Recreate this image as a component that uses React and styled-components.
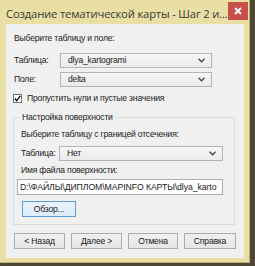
import React from "react";
import styled, { createGlobalStyle } from "styled-components";

const Global = createGlobalStyle`
  html, body { margin: 0; padding: 0; }
  body { width: 255px; height: 266px; overflow: hidden; background: #4e4736; }
`;

const Page = styled.div`
  width: 255px;
  height: 266px;
  display: flex;
  align-items: flex-start;
  background: #4e4736;
`;

const Window = styled.div`
  width: 249px;
  height: 262px;
  background: #e9dfa4;
  border-right: 1px solid #b9ad74;
  border-bottom: 1px solid #b9ad74;
  display: flex;
  flex-direction: column;
`;

const TitleBar = styled.div`
  height: 24px;
  display: flex;
  align-items: flex-start;
  justify-content: space-between;
  padding-left: 6px;
  box-sizing: border-box;
`;

const Title = styled.div`
  font-family: "Open Sans", "Noto Sans", sans-serif;
  font-size: 11.3px;
  line-height: 14px;
  margin-top: 7px;
  color: #3a3a3a;
  white-space: nowrap;
  letter-spacing: -0.2px;
`;

const Close = styled.div`
  width: 22px;
  height: 18px;
  margin-top: 2px;
  margin-right: 1px;
  background: #c7504a;
  color: #fff;
  display: flex;
  align-items: center;
  justify-content: center;
`;

const Client = styled.div`
  margin: 0 5px 0 6px;
  height: 234px;
  background: #f0f0f0;
  padding: 9px 0 0 8px;
  box-sizing: border-box;
  font-family: "Liberation Sans", Arial, sans-serif;
  font-size: 8.6px;
  letter-spacing: -0.2px;
  line-height: 11px;
  color: #222;
  display: flex;
  flex-direction: column;
  align-items: flex-start;
`;

const Text = styled.div`
  margin-top: ${(p) => p.$mt || 0}px;
  padding-left: ${(p) => p.$pl || 0}px;
  white-space: nowrap;
`;

const Row = styled.div`
  display: flex;
  align-items: center;
  margin-top: ${(p) => p.$mt || 0}px;
  padding-left: ${(p) => p.$pl || 0}px;
`;

const Label = styled.div`
  width: ${(p) => p.$w}px;
  white-space: nowrap;
`;

const Select = styled.div`
  width: ${(p) => p.$w}px;
  height: 15px;
  box-sizing: border-box;
  border: 1px solid #b4b4b4;
  background: linear-gradient(#f6f6f6, #ebebeb);
  display: flex;
  align-items: center;
  justify-content: space-between;
  padding: 0 6px 0 7px;
`;

const Check = styled.div`
  width: 9px;
  height: 9px;
  box-sizing: border-box;
  border: 1px solid #6f6f6f;
  background: #fff;
  margin-left: -1px;
  margin-right: 5px;
  display: flex;
  align-items: center;
  justify-content: center;
`;

const Group = styled.fieldset`
  margin: 8px 0 0 -1px;
  width: 222px;
  box-sizing: border-box;
  border: 1px solid #dcdcdc;
  padding: 0 11px 7px 3px;
  display: flex;
  flex-direction: column;
  align-items: flex-start;
`;

const Legend = styled.legend`
  padding: 0 2px;
  margin-left: 3px;
  line-height: 11px;
`;

const Input = styled.div`
  width: 206px;
  height: 16px;
  box-sizing: border-box;
  border: 1px solid #abadb3;
  background: #fff;
  margin-top: 3px;
  padding-left: 2px;
  display: flex;
  align-items: center;
  white-space: nowrap;
  overflow: hidden;
  font-size: 8.7px;
  letter-spacing: -0.08px;
`;

const Button = styled.div`
  width: ${(p) => p.$w}px;
  height: 16px;
  box-sizing: border-box;
  border: 1px solid ${(p) => (p.$def ? "#5b9bd8" : "#acacac")};
  background: ${(p) => (p.$def ? "linear-gradient(#eaf3fc, #dcecfc)" : "linear-gradient(#f0f0f0, #e5e5e5)")};
  display: flex;
  align-items: center;
  justify-content: center;
  margin-left: ${(p) => p.$ml || 0}px;
  margin-top: ${(p) => p.$mt || 0}px;
  white-space: nowrap;
`;

const Buttons = styled.div`
  display: flex;
  gap: 6px;
  margin-top: 8px;
`;

const Chevron = () => (
  <svg width="7" height="5" viewBox="0 0 7 5">
    <path d="M0.5 0.8 L3.5 3.8 L6.5 0.8" fill="none" stroke="#444" strokeWidth="1.3" />
  </svg>
);

export default function App() {
  return (
    <>
      <Global />
      <Page>
        <Window>
          <TitleBar>
            <Title>Создание тематической карты - Шаг 2 и...</Title>
            <Close>
              <svg width="8" height="8" viewBox="0 0 8 8">
                <path d="M1 1 L7 7 M7 1 L1 7" stroke="#fff" strokeWidth="1.8" />
              </svg>
            </Close>
          </TitleBar>
          <Client>
            <Text>Выберите таблицу и поле:</Text>
            <Row $mt={9}>
              <Label $w={46}>Таблица:</Label>
              <Select $w={152}>
                <span>dlya_kartogrami</span>
                <Chevron />
              </Select>
            </Row>
            <Row $mt={4}>
              <Label $w={46}>Поле:</Label>
              <Select $w={152}>
                <span>delta</span>
                <Chevron />
              </Select>
            </Row>
            <Row $mt={6}>
              <Check>
                <svg width="7" height="7" viewBox="0 0 7 7">
                  <path d="M0.8 3.6 L2.7 5.6 L6.3 0.9" fill="none" stroke="#111" strokeWidth="1.4" />
                </svg>
              </Check>
              <span>Пропустить нули и пустые значения</span>
            </Row>
            <Group>
              <Legend>Настройка поверхности</Legend>
              <Text $mt={6} $pl={4}>Выберите таблицу с границей отсечения:</Text>
              <Row $mt={6} $pl={4}>
                <Label $w={38}>Таблица:</Label>
                <Select $w={164}>
                  <span>Нет</span>
                  <Chevron />
                </Select>
              </Row>
              <Text $mt={4} $pl={4}>Имя файла поверхности:</Text>
              <Input>D:\ФАЙЛЫ\ДИПЛОМ\MAPINFO КАРТЫ\dlya_karto</Input>
              <Button $w={54} $def $ml={5} $mt={6}>Обзор...</Button>
            </Group>
            <Buttons>
              <Button $w={51}>&lt; Назад</Button>
              <Button $w={51}>Далее &gt;</Button>
              <Button $w={50}>Отмена</Button>
              <Button $w={52}>Справка</Button>
            </Buttons>
          </Client>
        </Window>
      </Page>
    </>
  );
}
